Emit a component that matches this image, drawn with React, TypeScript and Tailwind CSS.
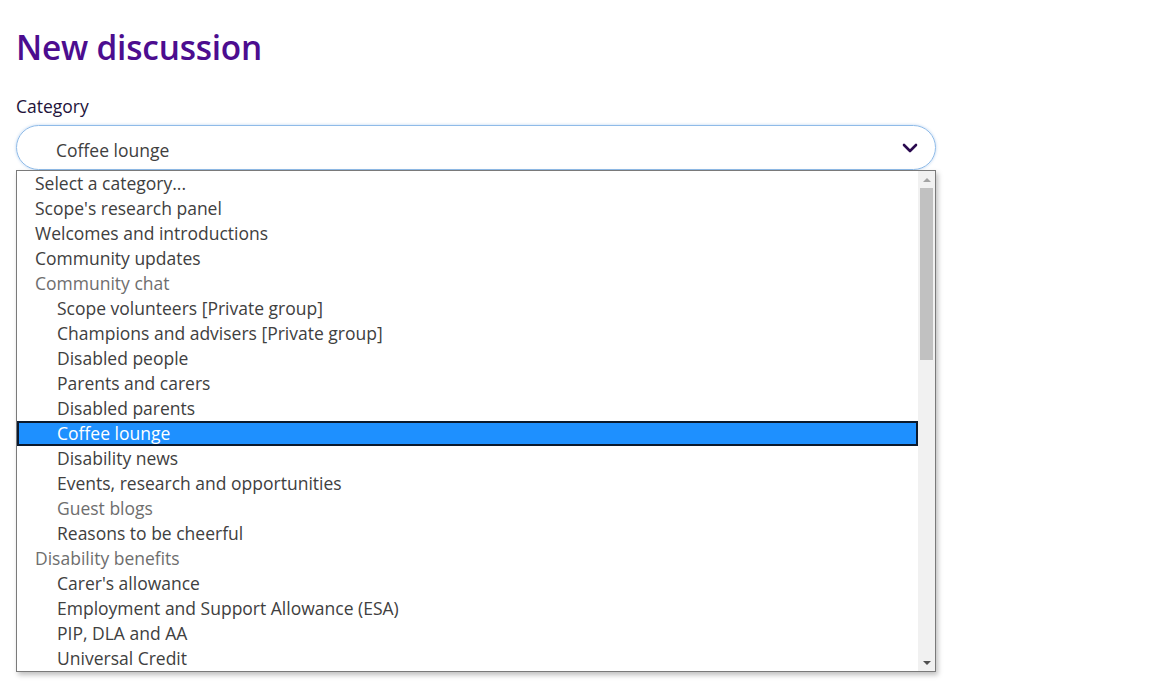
import React from 'react';

type Option = { label: string; indent?: boolean; muted?: boolean; selected?: boolean };

const OPTIONS: Option[] = [
  { label: 'Select a category...' },
  { label: "Scope's research panel" },
  { label: 'Welcomes and introductions' },
  { label: 'Community updates' },
  { label: 'Community chat', muted: true },
  { label: 'Scope volunteers [Private group]', indent: true },
  { label: 'Champions and advisers [Private group]', indent: true },
  { label: 'Disabled people', indent: true },
  { label: 'Parents and carers', indent: true },
  { label: 'Disabled parents', indent: true },
  { label: 'Coffee lounge', indent: true, selected: true },
  { label: 'Disability news', indent: true },
  { label: 'Events, research and opportunities', indent: true },
  { label: 'Guest blogs', indent: true, muted: true },
  { label: 'Reasons to be cheerful', indent: true },
  { label: 'Disability benefits', muted: true },
  { label: "Carer's allowance", indent: true },
  { label: 'Employment and Support Allowance (ESA)', indent: true },
  { label: 'PIP, DLA and AA', indent: true },
  { label: 'Universal Credit', indent: true },
];

export default function App() {
  return (
    <div className="min-h-screen bg-white px-4 pt-[26px] font-['Open_Sans',sans-serif]">
      <h1 className="text-[33.4px] leading-[42px] font-semibold text-[#4c0d8f] tracking-[-0.2px]">New discussion</h1>

      <label className="block mt-[28px] text-[17.5px] leading-[20px] text-[#23133a]">Category</label>

      <div className="mt-[9px] w-[920px]">
        {/* select box */}
        <div className="h-[45px] rounded-full border border-[#8fbbe8] shadow-[0_0_3px_rgba(90,150,220,0.45)] flex items-center justify-between pl-[39px] pr-[17px]">
          <span className="pt-[5px] text-[17.5px] text-[#404040]">Coffee lounge</span>
          <svg width="16" height="10" viewBox="0 0 16 10" fill="none">
            <path d="M2 2l6 6 6-6" stroke="#2a0a4f" strokeWidth="2.6" strokeLinecap="round" strokeLinejoin="round" />
          </svg>
        </div>

        {/* native-looking dropdown list */}
        <div className="flex border border-[#7a7a7a] bg-white shadow-[2px_3px_5px_rgba(0,0,0,0.25)] w-[920px]">
          <ul className="flex-1">
            {OPTIONS.map(o => (
              <li
                key={o.label}
                className={`h-[25px] flex items-center text-[17.5px] whitespace-nowrap ${
                  o.selected ? 'pl-[38px]' : o.indent ? 'pl-[40px]' : 'pl-[18px]'
                } ${
                  o.selected
                    ? 'bg-[#1e90ff] text-white border-2 border-[#0b1a2e]'
                    : o.muted
                    ? 'text-[#6e6e6e]'
                    : 'text-[#404040]'
                }`}
              >
                {o.label}
              </li>
            ))}
          </ul>
          {/* scrollbar */}
          <div className="w-[17px] bg-[#f1f1f1] flex flex-col items-center">
            <div className="h-[17px] flex items-center justify-center">
              <div className="w-0 h-0 border-l-[4px] border-r-[4px] border-b-[4px] border-l-transparent border-r-transparent border-b-[#a3a3a3]" />
            </div>
            <div className="w-[13px] h-[172px] bg-[#c1c1c1]" />
            <div className="flex-1" />
            <div className="h-[17px] flex items-center justify-center">
              <div className="w-0 h-0 border-l-[4px] border-r-[4px] border-t-[4px] border-l-transparent border-r-transparent border-t-[#505050]" />
            </div>
          </div>
        </div>
      </div>
    </div>
  );
}
